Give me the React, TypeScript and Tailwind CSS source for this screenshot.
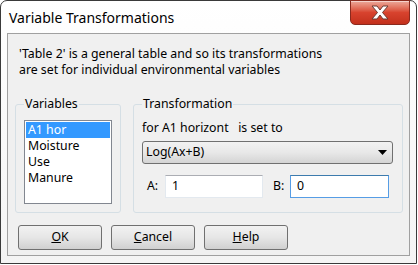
import React from 'react';

const font = { fontFamily: '"Noto Sans", "Liberation Sans", sans-serif' };

function CloseButton() {
  return (
    <div className="mt-[-1px] flex h-[25px] w-[60px] items-center justify-center rounded-b-[5px] border border-[#8a2a1e] bg-gradient-to-b from-[#eba99b] via-[#d8432e] to-[#c3301c] shadow-[inset_0_1px_0_rgba(255,255,255,0.5)]">
      <svg width="22" height="15" viewBox="0 0 22 15">
        <path
          d="M3 1 L8 1 L11 5 L14 1 L19 1 L13.5 7.5 L19 14 L14 14 L11 10 L8 14 L3 14 L8.5 7.5 Z"
          fill="#ffffff"
          stroke="#6b3b33"
          strokeWidth="1"
          strokeLinejoin="round"
        />
      </svg>
    </div>
  );
}

function WinButton({ label, rest }: { label: string; rest: string }) {
  return (
    <button className="flex h-[25px] w-[84px] items-center justify-center rounded-[3px] border border-[#707070] bg-gradient-to-b from-[#f2f2f2] via-[#e6e6e6] to-[#d0d0d0] text-[12.3px] text-black">
      <span>
        <span className="underline">{label}</span>
        {rest}
      </span>
    </button>
  );
}

export default function App() {
  return (
    <div style={font} className="h-[265px] w-[418px] overflow-hidden bg-white text-[12.3px] text-black">
      <div className="flex h-[264px] w-[417px] flex-col rounded-t-[7px] border border-[#3a3a3a] bg-gradient-to-b from-[#ffffff] to-[#f4f4f4] px-[6px] pb-[7px]">
        <div className="flex h-[32px] shrink-0 items-start justify-between">
          <div className="pt-[8px] pl-[2px] text-[14px] leading-[18px] text-black">Variable Transformations</div>
          <CloseButton />
        </div>
        <div className="flex flex-1 flex-col border border-[#a0a0a0] bg-[#f0f0f0] pl-[7px]">
          <div className="pt-[12px] pl-[4px] leading-[16px]">
            <div>'Table 2' is a general table and so its transformations</div>
            <div>are set for individual environmental variables</div>
          </div>
          <div className="mt-[18px] flex gap-[12px]">
            <fieldset className="h-[117px] w-[106px] rounded-[3px] border border-[#d5dfe5] px-[8px]">
              <legend className="px-[1px] leading-[16px]">Variables</legend>
              <div className="mt-[8px] h-[84px] w-[88px] border border-[#828790] bg-white p-[1px]">
                <div className="h-[16px] bg-[#3399ff] pl-[2px] leading-[16px] text-white">A1 hor</div>
                <div className="h-[16px] pl-[2px] leading-[16px]">Moisture</div>
                <div className="h-[16px] pl-[2px] leading-[16px]">Use</div>
                <div className="h-[16px] pl-[2px] leading-[16px]">Manure</div>
              </div>
            </fieldset>
            <fieldset className="h-[117px] w-[270px] rounded-[3px] border border-[#d5dfe5] px-[8px]">
              <legend className="px-[1px] leading-[16px]">Transformation</legend>
              <div className="mt-[8px] leading-[16px]">for A1 horizont&nbsp;&nbsp; is set to</div>
              <div className="mt-[5px] flex h-[23px] w-[251px] items-center justify-between rounded-[3px] border border-[#707070] bg-gradient-to-b from-[#f2f2f2] via-[#e8e8e8] to-[#d4d4d4] pr-[5px] pl-[3px]">
                <span>Log(Ax+B)</span>
                <svg width="9" height="5" viewBox="0 0 9 5">
                  <path d="M0 0 L9 0 L4.5 5 Z" fill="#000000" />
                </svg>
              </div>
              <div className="mt-[11px] flex items-center">
                <span className="ml-[5px] w-[18px]">A:</span>
                <div className="flex h-[23px] w-[98px] items-center border border-[#e3e9ef] border-t-[#abadb3] bg-white pl-[6px]">1</div>
                <span className="ml-[10px] w-[17px]">B:</span>
                <div className="flex h-[23px] w-[99px] items-center border border-[#569de5] border-t-[#3d7bad] bg-white pl-[6px]">0</div>
              </div>
            </fieldset>
          </div>
          <div className="mt-[12px] flex gap-[9px] pl-[3px]">
            <WinButton label="O" rest="K" />
            <WinButton label="C" rest="ancel" />
            <WinButton label="H" rest="elp" />
          </div>
        </div>
      </div>
    </div>
  );
}
